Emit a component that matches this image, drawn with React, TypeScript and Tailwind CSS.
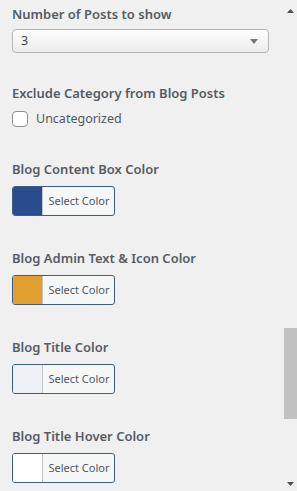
import React from "react";

const font = { fontFamily: '"Noto Sans", "Open Sans", sans-serif' };

function ColorControl({ title, color }: { title: string; color: string }) {
  return (
    <div className="flex flex-col">
      <div className="h-[20px] text-[13px] leading-[20px] font-semibold text-[#555c63]">{title}</div>
      <div className="mt-[7px] flex h-[30px] w-[103px] overflow-hidden rounded-[3px] border border-[#3d5e7e] bg-[#f6f7f7]">
        <div className="h-full w-[30px] border-r border-[#c3c4c7]" style={{ background: color }} />
        <div className="flex flex-1 items-center justify-center pl-[1px] text-[11px] text-[#50575e]">Select Color</div>
      </div>
    </div>
  );
}

export default function App() {
  return (
    <div className="relative h-[491px] w-[297px] overflow-hidden bg-[#f0f0f1]" style={font}>
      <div className="flex flex-col pl-[12px] pt-[4px]">
        <div className="h-[20px] text-[13px] leading-[20px] font-semibold text-[#555c63]">Number of Posts to show</div>
        <div className="mt-[5px] flex h-[24px] w-[257px] items-center justify-between rounded-[4px] border border-[#b4b4b4] bg-gradient-to-b from-white to-[#ececec] pl-[8px] pr-[10px]">
          <span className="text-[12.5px] text-[#3c434a]">3</span>
          <svg width="8" height="5" viewBox="0 0 8 5"><path d="M0 0H8L4 5Z" fill="#777" /></svg>
        </div>

        <div className="mt-[30px] h-[20px] text-[13px] leading-[20px] font-semibold text-[#555c63]">Exclude Category from Blog Posts</div>
        <div className="mt-[7px] flex items-center gap-[8px]">
          <div className="h-[16px] w-[16px] rounded-[4px] border border-[#8c8f94] bg-white" />
          <span className="text-[12.5px] text-[#50575e]">Uncategorized</span>
        </div>

        <div className="mt-[30px] flex flex-col gap-[32px]">
          <ColorControl title="Blog Content Box Color" color="#2a4b8d" />
          <ColorControl title="Blog Admin Text & Icon Color" color="#e09f2e" />
          <ColorControl title="Blog Title Color" color="#eef2f7" />
          <ColorControl title="Blog Title Hover Color" color="#ffffff" />
        </div>
      </div>

      <div className="absolute right-0 top-0 flex h-full w-[13px] flex-col items-center">
        <svg className="mt-[9px]" width="7" height="4" viewBox="0 0 7 4"><path d="M0 4H7L3.5 0Z" fill="#505050" /></svg>
        <div className="absolute left-0 top-[328px] h-[91px] w-[13px] bg-[#c1c1c1]" />
        <svg className="absolute bottom-[5px]" width="7" height="4" viewBox="0 0 7 4"><path d="M0 0H7L3.5 4Z" fill="#505050" /></svg>
      </div>
    </div>
  );
}
